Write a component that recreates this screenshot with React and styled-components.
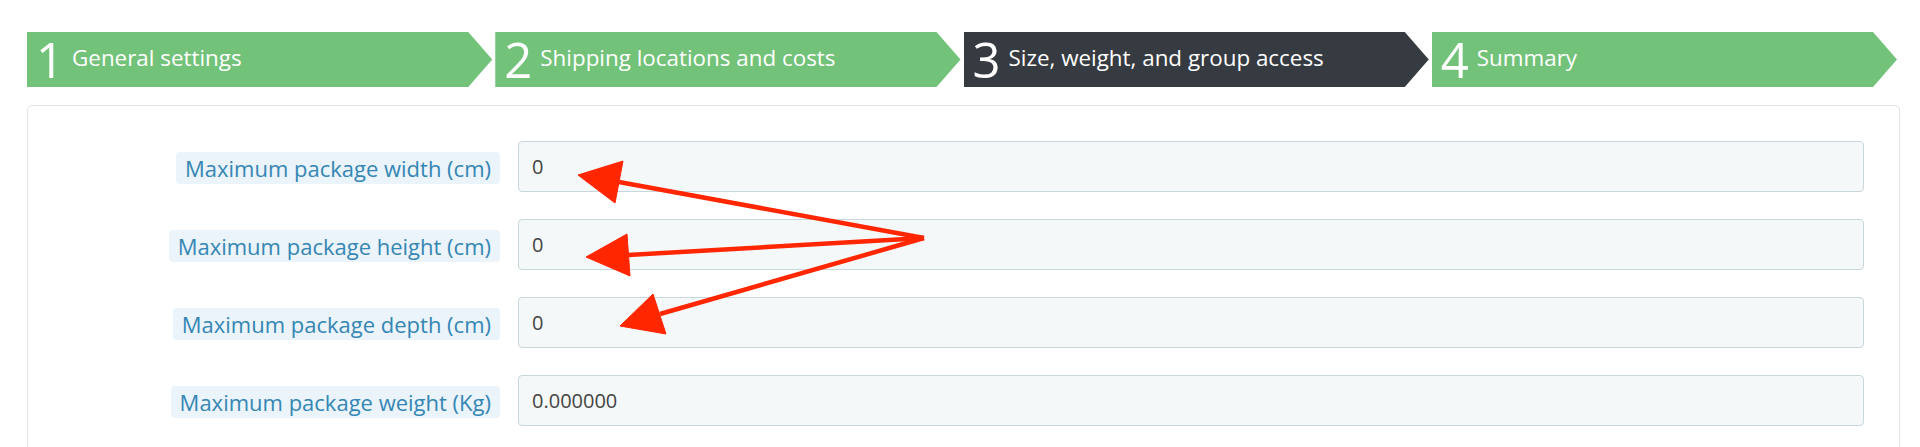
import React from 'react';
import styled, { createGlobalStyle } from 'styled-components';

const GlobalStyle = createGlobalStyle`
  html, body {
    margin: 0;
    padding: 0;
    background: #fff;
    overflow: hidden;
    font-family: "Open Sans", "DejaVu Sans", sans-serif;
  }
  * { box-sizing: border-box; }
`;

const Page = styled.div`
  position: relative;
  padding: 32px 20px 0 27px;
`;

const Steps = styled.ol`
  display: grid;
  grid-template-columns: repeat(4, 1fr);
  height: 55px;
  margin: 0;
  padding: 0;
  list-style: none;
`;

const Step = styled.li`
  display: flex;
  align-items: center;
  margin-right: 3px;
  padding-left: 9px;
  color: #fff;
  background: ${p => (p.$active ? '#363a41' : '#72c279')};
  clip-path: polygon(0 0, calc(100% - 24px) 0, 100% 50%, calc(100% - 24px) 100%, 0 100%);
`;

const StepNum = styled.span`
  font-size: 49px;
  font-weight: 400;
  line-height: 1;
`;

const StepTitle = styled.span`
  margin-left: 8px;
  padding-bottom: 3px;
  font-size: 22.4px;
  line-height: 1;
`;

const Panel = styled.div`
  display: grid;
  row-gap: 27px;
  margin-top: 18px;
  padding: 35px 35px 35px 0;
  border: 1px solid #e3e3e3;
  border-radius: 5px;
`;

const Row = styled.div`
  display: grid;
  grid-template-columns: 472px 1fr;
  column-gap: 18px;
  align-items: center;
`;

const Label = styled.label`
  justify-self: end;
  margin-top: 2px;
  padding: 0 9px;
  line-height: 32px;
  font-size: 22px;
  color: #3586b4;
  background: #eaf4fa;
  border-radius: 4px;
`;

const Field = styled.input`
  width: 100%;
  height: 51px;
  padding: 0 13px;
  font-family: "Open Sans", "DejaVu Sans", sans-serif;
  font-size: 20px;
  color: #444;
  background: #f5f8f9;
  border: 1px solid #c8d7dc;
  border-radius: 4px;
  outline: none;
`;

const Overlay = styled.svg`
  position: absolute;
  top: 0;
  left: 0;
  pointer-events: none;
`;

const steps = [
  { num: '1', title: 'General settings' },
  { num: '2', title: 'Shipping locations and costs' },
  { num: '3', title: 'Size, weight, and group access', active: true },
  { num: '4', title: 'Summary' },
];

const fields = [
  { label: 'Maximum package width (cm)', value: '0' },
  { label: 'Maximum package height (cm)', value: '0' },
  { label: 'Maximum package depth (cm)', value: '0' },
  { label: 'Maximum package weight (Kg)', value: '0.000000' },
];

// annotation arrows, page coordinates
const arrows = [
  { end: [619, 182], head: '578,175 623,161 615,203' },
  { end: [628, 255], head: '586,257 627,234 630,276' },
  { end: [660, 314], head: '620,326 653,294 666,334' },
];

export default function App() {
  return (
    <Page>
      <GlobalStyle />
      <Steps>
        {steps.map(s => (
          <Step key={s.num} $active={s.active}>
            <StepNum>{s.num}</StepNum>
            <StepTitle>{s.title}</StepTitle>
          </Step>
        ))}
      </Steps>
      <Panel>
        {fields.map(f => (
          <Row key={f.label}>
            <Label>{f.label}</Label>
            <Field type="text" defaultValue={f.value} readOnly />
          </Row>
        ))}
      </Panel>
      <Overlay width="1920" height="447" viewBox="0 0 1920 447">
        {arrows.map((a, i) => (
          <g key={i} fill="#ff2600" stroke="#ff2600">
            <line x1="924" y1="238" x2={a.end[0]} y2={a.end[1]} strokeWidth="4.5" />
            <polygon points={a.head} strokeWidth="1" strokeLinejoin="miter" />
          </g>
        ))}
      </Overlay>
    </Page>
  );
}
